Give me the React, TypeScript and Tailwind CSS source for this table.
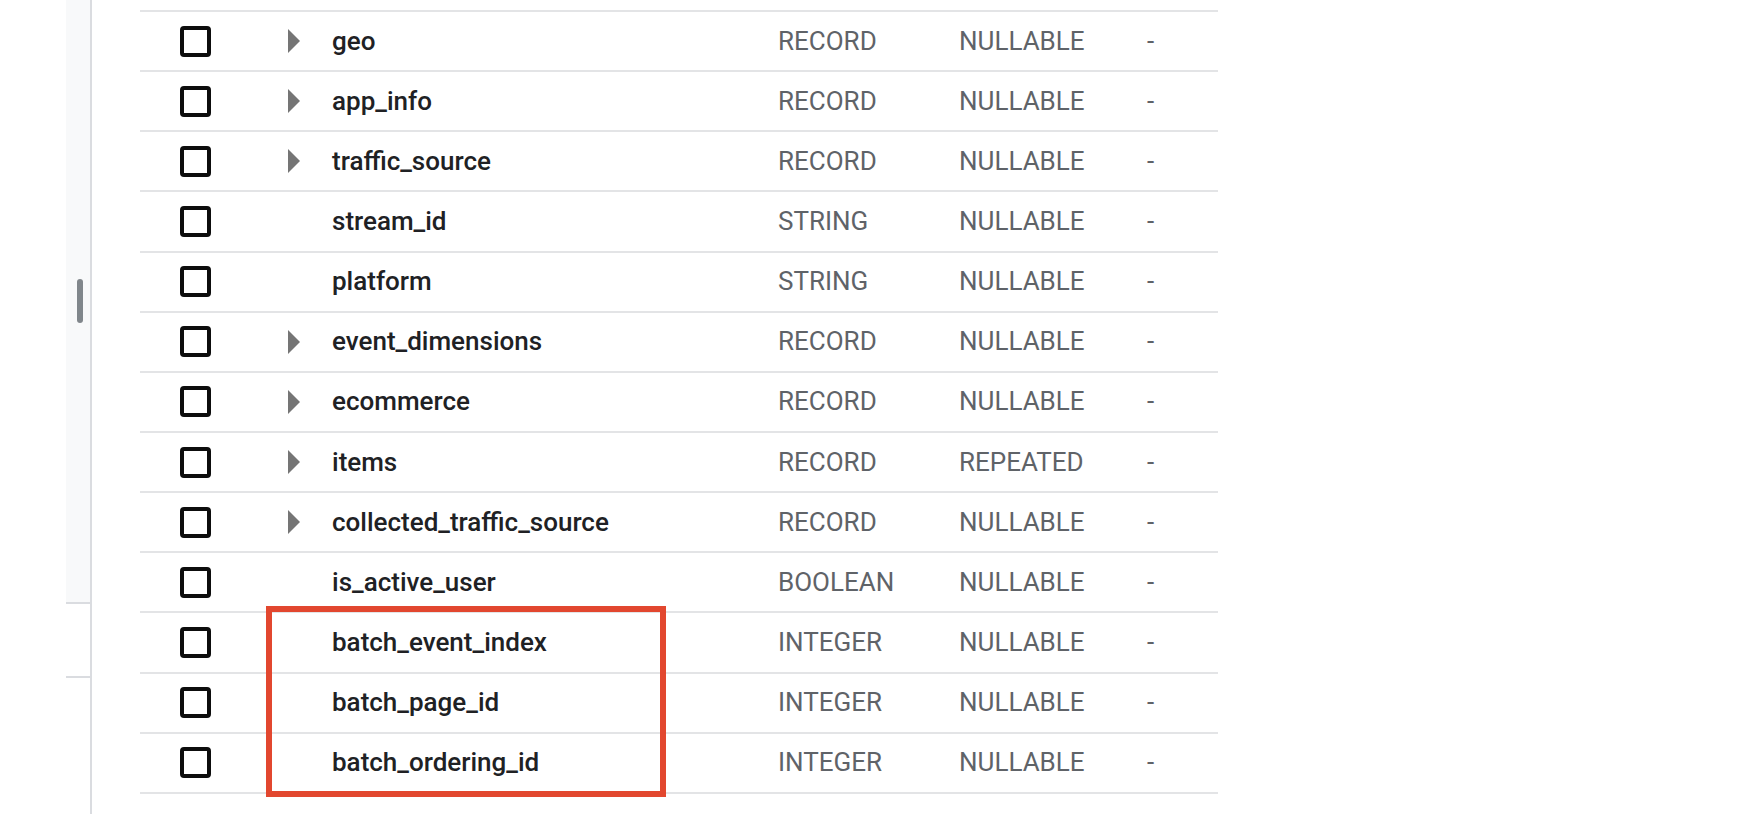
import React from 'react'

type Field = {
  name: string
  type: string
  mode: string
  nested?: boolean
}

const fields: Field[] = [
  { name: 'geo', type: 'RECORD', mode: 'NULLABLE', nested: true },
  { name: 'app_info', type: 'RECORD', mode: 'NULLABLE', nested: true },
  { name: 'traffic_source', type: 'RECORD', mode: 'NULLABLE', nested: true },
  { name: 'stream_id', type: 'STRING', mode: 'NULLABLE' },
  { name: 'platform', type: 'STRING', mode: 'NULLABLE' },
  { name: 'event_dimensions', type: 'RECORD', mode: 'NULLABLE', nested: true },
  { name: 'ecommerce', type: 'RECORD', mode: 'NULLABLE', nested: true },
  { name: 'items', type: 'RECORD', mode: 'REPEATED', nested: true },
  { name: 'collected_traffic_source', type: 'RECORD', mode: 'NULLABLE', nested: true },
  { name: 'is_active_user', type: 'BOOLEAN', mode: 'NULLABLE' },
  { name: 'batch_event_index', type: 'INTEGER', mode: 'NULLABLE' },
  { name: 'batch_page_id', type: 'INTEGER', mode: 'NULLABLE' },
  { name: 'batch_ordering_id', type: 'INTEGER', mode: 'NULLABLE' },
]

function ExpandArrow() {
  return (
    <svg width="12" height="24" viewBox="0 0 12 24" className="block">
      <polygon points="0,0 12,12 0,24" fill="#757575" />
    </svg>
  )
}

function FieldRow({ field }: { field: Field }) {
  return (
    <div className="grid grid-cols-[192px_446px_181px_188px_71px] items-center h-[60.15px] border-b-2 border-[#e3e4e6]">
      <div className="flex items-center">
        <div className="ml-[40px] w-[31px] h-[31px] border-[4px] border-[#0d0d0d] rounded-[4px]" />
        {field.nested && (
          <div className="ml-[77px]">
            <ExpandArrow />
          </div>
        )}
      </div>
      <div className="text-[#202124] font-medium">{field.name}</div>
      <div className="text-[#5f6368]">{field.type}</div>
      <div className="text-[#5f6368]">{field.mode}</div>
      <div className="text-[#5f6368]">-</div>
    </div>
  )
}

export default function App() {
  return (
    <div
      className="relative w-[1752px] h-[814px] bg-white flex overflow-hidden"
      style={{ fontFamily: 'Roboto, "Liberation Sans", sans-serif' }}
    >
      {/* left rail */}
      <div className="ml-[66px] w-[26px] h-full border-r-2 border-[#dadce0] flex flex-col">
        <div className="h-[604px] bg-[#f8f9fa] border-b-2 border-[#dadce0] pt-[279px] pl-[11px]">
          <div className="w-[6px] h-[44px] rounded-full bg-[#80868b]" />
        </div>
        <div className="h-[74px] border-b-2 border-[#dadce0]" />
      </div>

      {/* schema table */}
      <div className="ml-[48px] mt-[10px] w-[1078px] text-[26px] leading-normal">
        <div className="border-t-2 border-[#e3e4e6]">
          {fields.map((f) => (
            <FieldRow key={f.name} field={f} />
          ))}
        </div>
      </div>

      {/* highlight */}
      <div className="absolute left-[266px] top-[606px] w-[400px] h-[191px] border-[6px] border-[#e2472f]" />
    </div>
  )
}
